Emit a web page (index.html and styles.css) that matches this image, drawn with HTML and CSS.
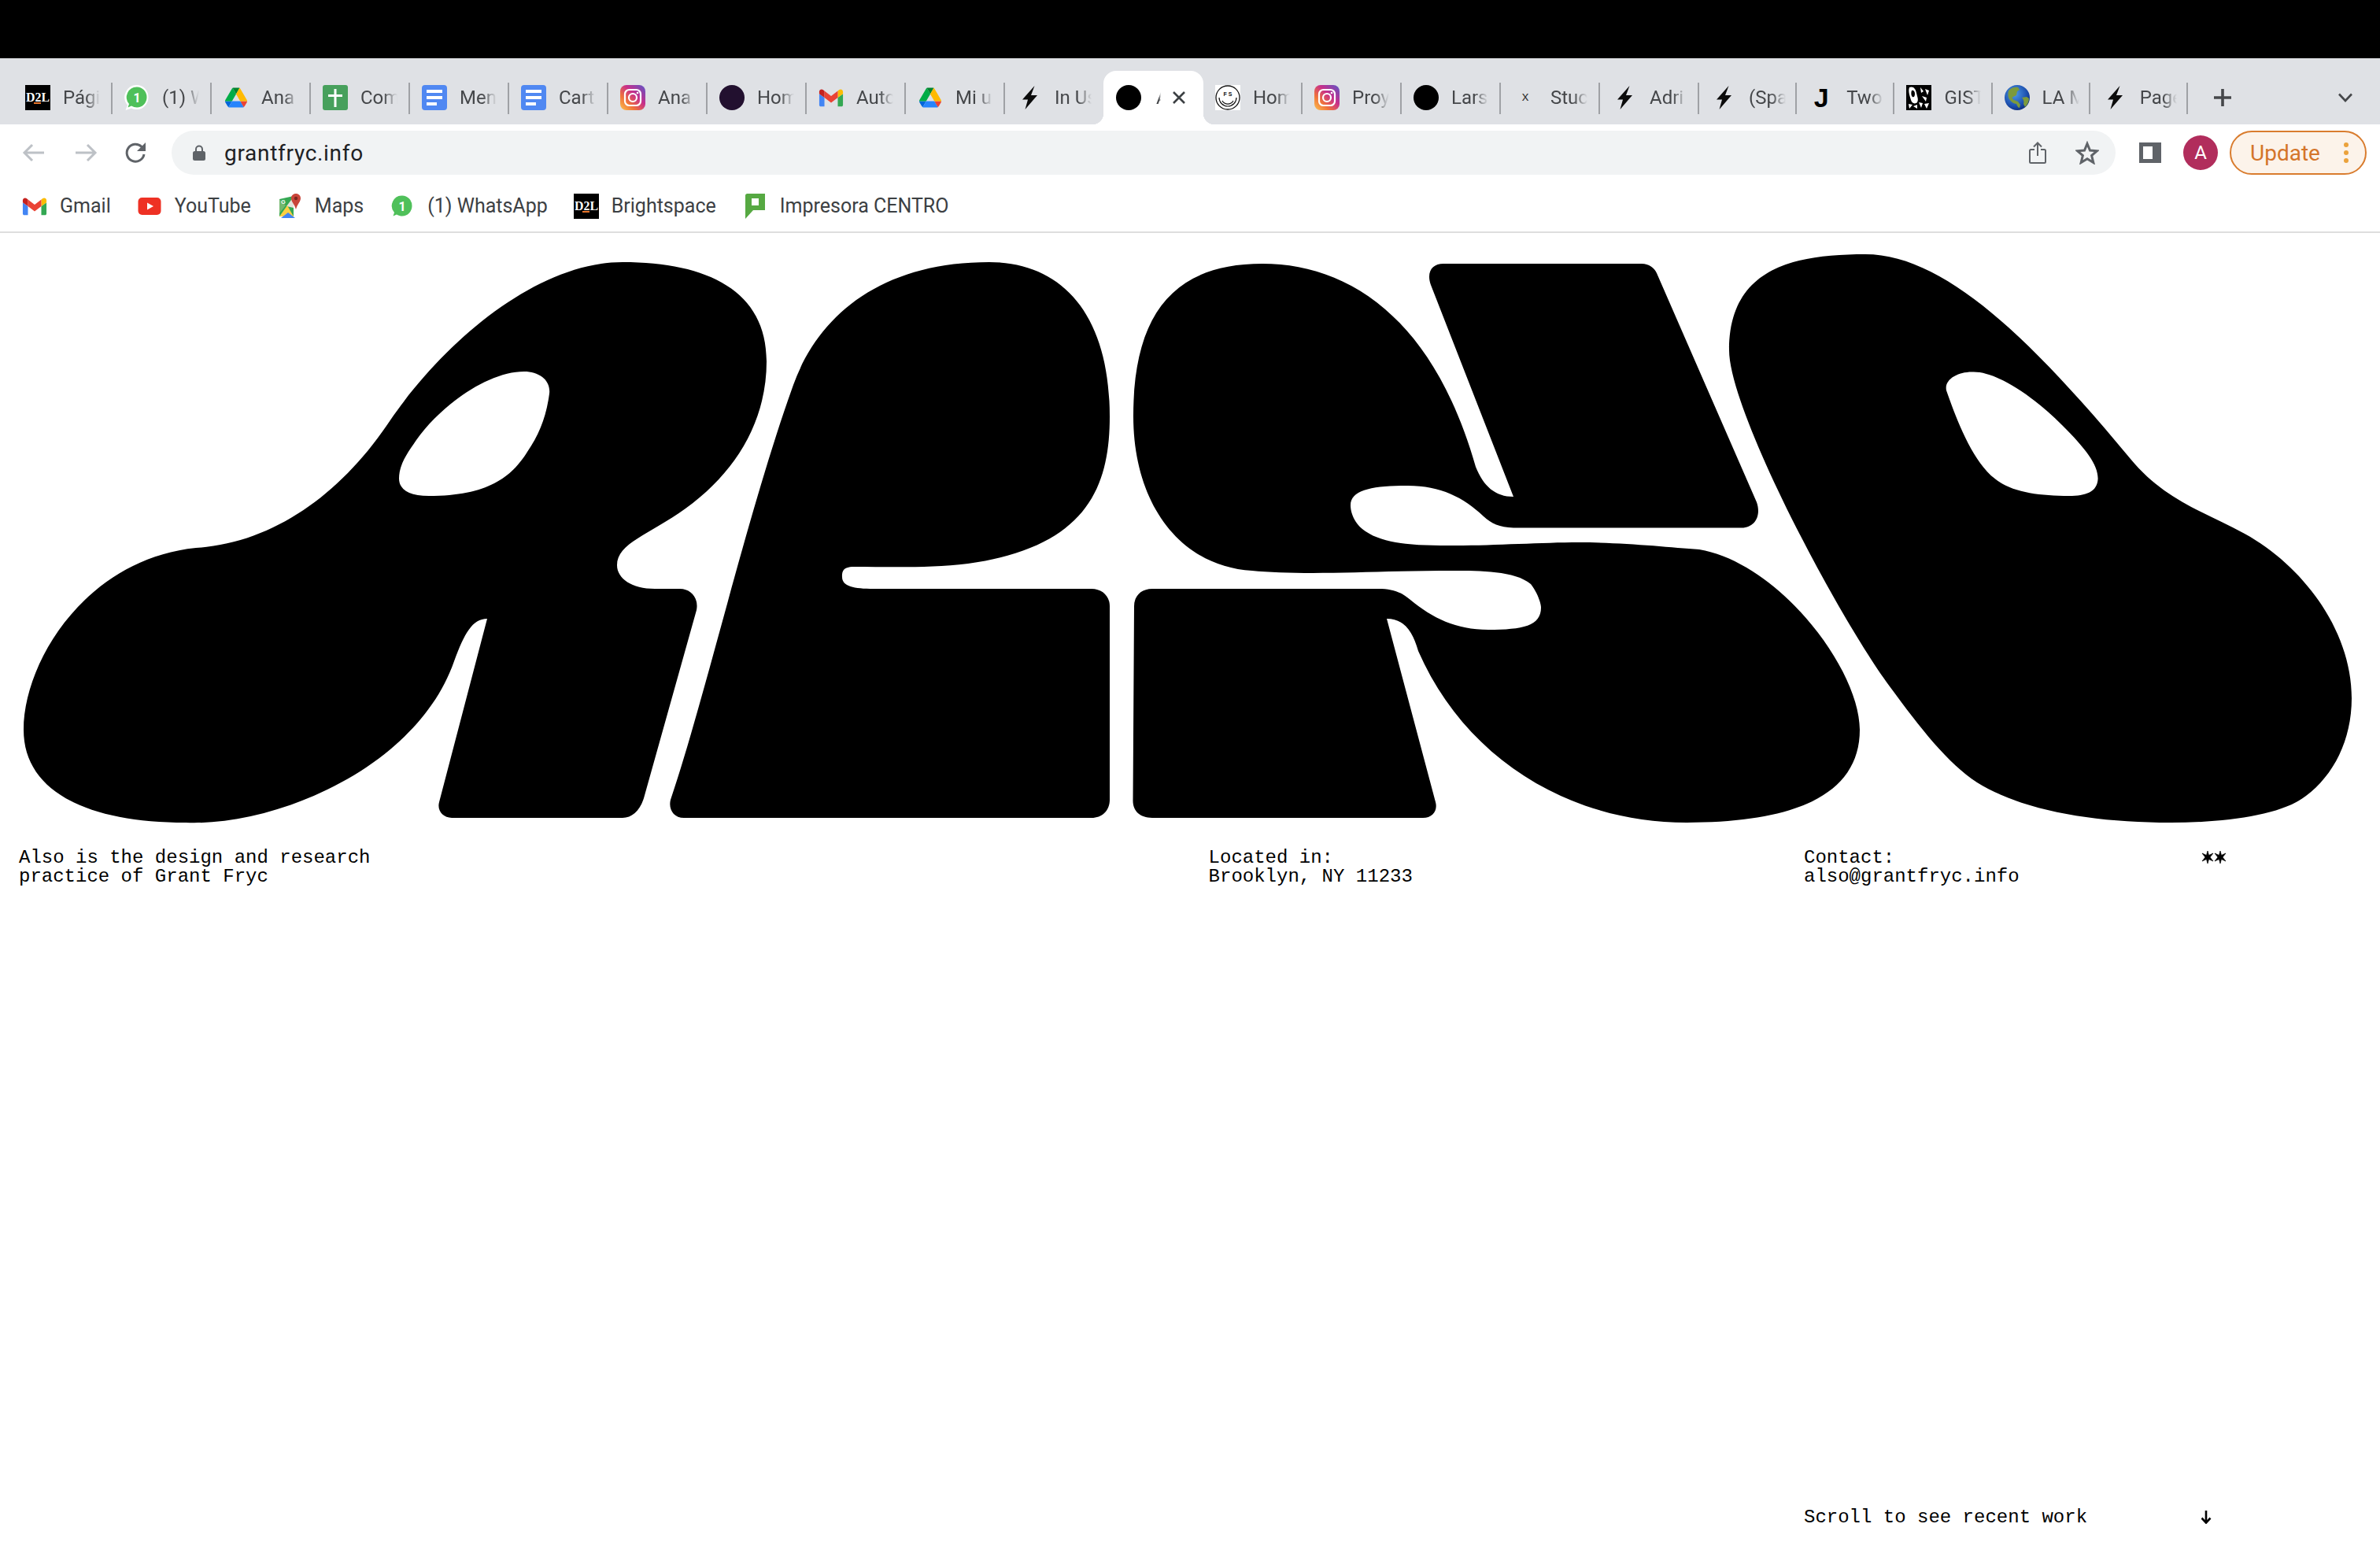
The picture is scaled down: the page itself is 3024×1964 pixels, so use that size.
FILE: index.html
```html
<!DOCTYPE html>
<html lang="en">
<head>
<meta charset="utf-8">
<title>Also</title>
<link rel="stylesheet" href="styles.css">
</head>
<body>
<svg class="sprite" aria-hidden="true">
  <defs>
    <linearGradient id="ig" x1="0" y1="1" x2="1" y2="0">
      <stop offset="0" stop-color="#fcc24f"/><stop offset=".3" stop-color="#f0743a"/><stop offset=".6" stop-color="#c72f8b"/><stop offset="1" stop-color="#5b55c8"/>
    </linearGradient>
    <radialGradient id="gl" cx=".4" cy=".35" r=".7">
      <stop offset="0" stop-color="#4f9be8"/><stop offset=".7" stop-color="#1c4fae"/><stop offset="1" stop-color="#0c2a78"/>
    </radialGradient>
    <symbol id="i-d2l" viewBox="0 0 32 32">
      <rect width="32" height="32" fill="#000"/>
      <text x="16" y="21" text-anchor="middle" textLength="30" lengthAdjust="spacingAndGlyphs" class="d2l-t">D2L</text>
      <rect x="11" y="22" width="9" height="2" fill="#e8762c"/>
    </symbol>
    <symbol id="i-wa" viewBox="0 0 32 32">
      <path d="M16 0a14.500 15.500 0 0 1 0 31c-3 0-5-.5-7-1.500L1.500 32l2.500-6.500A15.500 15.500 0 0 1 16 0z" fill="#fff"/>
      <path d="M16 2.500a12.500 13 0 0 1 0 26c-2.500 0-5-.7-7-2l-4.500 2 1.500-4.500A13 13 0 0 1 16 2.500z" fill="#4fc05a"/>
      <text x="16" y="21.500" text-anchor="middle" class="wa-t">1</text>
    </symbol>
    <symbol id="i-drive" viewBox="-6 -2 99.300 82">
      <path d="m6.600 66.850 3.850 6.650c.8 1.400 1.950 2.500 3.300 3.300l13.750-23.800h-27.500c0 1.550.4 3.100 1.200 4.500z" fill="#0066da"/>
      <path d="m43.650 25-13.750-23.800c-1.350.8-2.500 1.900-3.300 3.300l-25.400 44a9.060 9.060 0 0 0 -1.200 4.500h27.500z" fill="#00ac47"/>
      <path d="m73.550 76.800c1.350-.8 2.500-1.900 3.300-3.300l1.600-2.750 7.650-13.250c.8-1.400 1.200-2.950 1.200-4.500h-27.502l5.852 11.500z" fill="#ea4335"/>
      <path d="m43.650 25 13.750-23.800c-1.350-.8-2.900-1.200-4.500-1.200h-18.500c-1.600 0-3.150.45-4.500 1.200z" fill="#00832d"/>
      <path d="m59.800 53h-32.300l-13.750 23.800c1.350.8 2.900 1.200 4.500 1.200h50.800c1.600 0 3.150-.45 4.500-1.200z" fill="#2684fc"/>
      <path d="m73.400 26.500-12.700-22c-.8-1.400-1.950-2.500-3.300-3.300l-13.750 23.800 16.150 28h27.450c0-1.550-.4-3.100-1.200-4.500z" fill="#ffba00"/>
    </symbol>
    <symbol id="i-cross" viewBox="0 0 32 32">
      <rect width="32" height="32" rx="3" fill="#47a05c"/>
      <path d="M14.500 5h3v7H25v3h-7.500v13h-3V15H7v-3h7.500z" fill="#fff"/>
    </symbol>
    <symbol id="i-doc" viewBox="0 0 32 32">
      <rect width="32" height="32" rx="4" fill="#5088f2"/>
      <path d="M6 6h20v4H6zM6 14h20v4H6zM6 22h13v4H6z" fill="#fff"/>
    </symbol>
    <symbol id="i-ig" viewBox="0 0 32 32">
      <rect width="32" height="32" rx="8" fill="url(#ig)"/>
      <rect x="6" y="6" width="20" height="20" rx="5.500" fill="none" stroke="#fff" stroke-width="2.200"/>
      <circle cx="16" cy="16" r="5" fill="none" stroke="#fff" stroke-width="2.200"/>
      <circle cx="22" cy="10" r="1.300" fill="#fff"/>
    </symbol>
    <symbol id="i-dark" viewBox="0 0 32 32"><circle cx="16" cy="16" r="16" fill="#22102f"/></symbol>
    <symbol id="i-black" viewBox="0 0 32 32"><circle cx="16" cy="16" r="16" fill="#000"/></symbol>
    <symbol id="i-gmail" viewBox="-1 -5 34 34">
      <path fill="#4285f4" d="M2 24h5V12L0 7v15c0 1 .9 2 2 2z"/>
      <path fill="#34a853" d="M25 24h5c1.100 0 2-1 2-2V7l-7 5z"/>
      <path fill="#fbbc04" d="M25 3v9l7-5V4c0-2.600-3-4-5-2.500z"/>
      <path fill="#ea4335" d="M7 12V3l9 6.800L25 3v9l-9 6.800z"/>
      <path fill="#c5221f" d="M0 4v3l7 5V3L5 1.500C3 0 0 1.400 0 4z"/>
    </symbol>
    <symbol id="i-bolt" viewBox="0 0 32 32">
      <path d="M22.500 1 7 18.500h7L10.500 31 26 13h-8z" fill="#0b0b0b"/>
    </symbol>
    <symbol id="i-fs" viewBox="0 0 32 32">
      <rect width="32" height="32" fill="#fff"/>
      <circle cx="16" cy="16" r="15" fill="none" stroke="#111" stroke-width="1.300"/>
      <path d="M5 16a11 11 0 0 0 22 0M9 20a8 8 0 0 0 14 0" fill="none" stroke="#111" stroke-width="1.200"/>
      <text x="16" y="14" text-anchor="middle" class="fs-t">F S</text>
    </symbol>
    <symbol id="i-gist" viewBox="0 0 32 32">
      <rect width="32" height="32" fill="#000"/>
      <path d="M4 3c5-2 8 2 9 7s3 8 1 12c-3 3-7 1-8-3S2 8 4 3z" fill="#fff"/>
      <path d="M7 7c2-1 4 1 4 4s-1 5-3 4-2-6-1-8z" fill="#000"/>
      <path d="M18 3l4 5-3 2zM24 5l5 2-2 6zM20 14l6 2-1 5zM16 22l5 1-2 6zM23 24l6-1-3 7zM3 24l5 1-4 5zM9 27l5-2 0 5z" fill="#fff"/>
    </symbol>
    <symbol id="i-globe" viewBox="0 0 32 32">
      <circle cx="16" cy="16" r="16" fill="url(#gl)"/>
      <path d="M6 6c3-3 8-4 11-3l2 3-3 2-1 5-4 2c-2 0-1 3 1 4l5 2 3 4-1 4c-2 0-3-3-4-5-3 0-7-3-9-6S4 8 6 6zM22 16l6-1 3 2c0 4-2 8-5 11l-2-4c1-3 0-6-2-8z" fill="#7c9a3c"/>
    </symbol>
    <symbol id="i-maps" viewBox="0 0 32 32">
      <path d="M3 7l18-4v26H3z" fill="#34a853"/>
      <path d="M12 16 21 4v14z" fill="#e4e2db"/>
      <path d="M3 29 13 15l8 14z" fill="#fbd044"/>
      <path d="M5 31 14 24l9 7z" fill="#4285f4"/>
      <path d="M3 7l8 8-8 10z" fill="#74b86f"/>
      <path d="M24 0c3.500 0 6 2.500 6 6 0 4-4 7-6 14-2-7-6-10-6-14 0-3.500 2.500-6 6-6z" fill="#c9453a"/>
      <circle cx="24" cy="6" r="2.200" fill="#7a2720"/>
      <text x="8" y="13" text-anchor="middle" class="maps-t">G</text>
    </symbol>
    <symbol id="i-yt" viewBox="0 0 32 32">
      <rect x="1.500" y="5" width="29" height="22" rx="5" fill="#ee3124"/>
      <path d="M13 11.500 21 16l-8 4.500z" fill="#fff"/>
    </symbol>
    <symbol id="i-print" viewBox="0 0 32 32">
      <path d="M4 2.500C4 1 5 0 6.500 0H29v21H14L4 32z" fill="#56a942"/>
      <rect x="12" y="6" width="9" height="9" fill="#fff"/>
    </symbol>
  </defs>
</svg>

<div class="page">
  <header class="chrome">
    <div class="topbar"></div>
    <div class="tabstrip">
      <div class="tab"><svg class="fav"><use href="#i-d2l"/></svg><span class="title">Pági</span></div>
      <div class="tab"><svg class="fav"><use href="#i-wa"/></svg><span class="title">(1) W</span></div>
      <div class="tab"><svg class="fav"><use href="#i-drive"/></svg><span class="title">Ana</span></div>
      <div class="tab"><svg class="fav"><use href="#i-cross"/></svg><span class="title">Com</span></div>
      <div class="tab"><svg class="fav"><use href="#i-doc"/></svg><span class="title">Men</span></div>
      <div class="tab"><svg class="fav"><use href="#i-doc"/></svg><span class="title">Cart</span></div>
      <div class="tab"><svg class="fav"><use href="#i-ig"/></svg><span class="title">Ana</span></div>
      <div class="tab"><svg class="fav"><use href="#i-dark"/></svg><span class="title">Hom</span></div>
      <div class="tab"><svg class="fav"><use href="#i-gmail"/></svg><span class="title">Auto</span></div>
      <div class="tab"><svg class="fav"><use href="#i-drive"/></svg><span class="title">Mi u</span></div>
      <div class="tab tab-before-active"><svg class="fav"><use href="#i-bolt"/></svg><span class="title">In Us</span></div>
      <div class="tab tab-active"><svg class="fav"><use href="#i-black"/></svg><span class="title title-active">A</span>
        <svg class="tab-close" viewBox="0 0 18 18"><path d="M2 2l14 14M16 2 2 16"/></svg></div>
      <div class="tab"><svg class="fav"><use href="#i-fs"/></svg><span class="title">Hom</span></div>
      <div class="tab"><svg class="fav"><use href="#i-ig"/></svg><span class="title">Proy</span></div>
      <div class="tab"><svg class="fav"><use href="#i-black"/></svg><span class="title">Lars</span></div>
      <div class="tab"><span class="fav fav-x">x</span><span class="title">Stuc</span></div>
      <div class="tab"><svg class="fav"><use href="#i-bolt"/></svg><span class="title">Adri</span></div>
      <div class="tab tab-tight"><svg class="fav"><use href="#i-bolt"/></svg><span class="title">(Spa</span></div>
      <div class="tab tab-tight"><span class="fav fav-j">J</span><span class="title">Two</span></div>
      <div class="tab tab-tight"><svg class="fav"><use href="#i-gist"/></svg><span class="title">GIST</span></div>
      <div class="tab tab-tight"><svg class="fav"><use href="#i-globe"/></svg><span class="title">LA M</span></div>
      <div class="tab tab-tight"><svg class="fav"><use href="#i-bolt"/></svg><span class="title">Page</span></div>
      <svg class="newtab" viewBox="0 0 24 24"><path d="M12 1v22M1 12h22"/></svg>
      <svg class="tabmenu" viewBox="0 0 18 12"><path d="M1 1.500 9 10l8-8.500"/></svg>
    </div>

    <div class="toolbar">
      <svg class="nav nav-off" viewBox="0 0 32 32"><path d="M29 16H5M14 6 4 16l10 10"/></svg>
      <svg class="nav nav-off nav-fwd" viewBox="0 0 32 32"><path d="M3 16h24M18 6l10 10-10 10"/></svg>
      <svg class="nav nav-on" viewBox="0 0 32 32"><path d="M26 18a11 11 0 1 1-3-9.500l3.500 3.500"/><path class="solid" d="M28 3v11H17z"/></svg>
      <div class="omnibox">
        <svg class="lock" viewBox="0 0 16 20"><path d="M4 8V5.500a4 4 0 0 1 8 0V8" fill="none" stroke="#5f6368" stroke-width="2"/><rect y="8" width="16" height="12" rx="2.500" fill="#5f6368"/></svg>
        <span class="url">grantfryc.info</span>
        <svg class="omni-share" viewBox="0 0 22 28"><path d="M7 10H2.500A1.500 1.500 0 0 0 1 11.500v14A1.500 1.500 0 0 0 2.500 27h17a1.500 1.500 0 0 0 1.500-1.500v-14a1.500 1.500 0 0 0-1.500-1.500H15M11 18V2M6 6.500 11 1.500l5 5"/></svg>
        <svg class="omni-star" viewBox="0 0 30 30"><path d="M15 3.500 18.500 12l9 .7-6.900 5.900 2.200 8.900L15 22.700l-7.800 4.800 2.200-8.900L2.500 12.700l9-.7z"/></svg>
      </div>
      <div class="sidepanel"></div>
      <div class="avatar">A</div>
      <div class="update"><span>Update</span><svg class="dots" viewBox="0 0 8 28"><circle cx="4" cy="4" r="3"/><circle cx="4" cy="14" r="3"/><circle cx="4" cy="24" r="3"/></svg></div>
    </div>

    <nav class="bookmarks">
      <div class="bm"><svg class="fav"><use href="#i-gmail"/></svg><span>Gmail</span></div>
      <div class="bm"><svg class="fav"><use href="#i-yt"/></svg><span>YouTube</span></div>
      <div class="bm"><svg class="fav"><use href="#i-maps"/></svg><span>Maps</span></div>
      <div class="bm"><svg class="fav"><use href="#i-wa"/></svg><span>(1) WhatsApp</span></div>
      <div class="bm"><svg class="fav"><use href="#i-d2l"/></svg><span>Brightspace</span></div>
      <div class="bm"><svg class="fav"><use href="#i-print"/></svg><span>Impresora CENTRO</span></div>
    </nav>
  </header>

  <main class="site">
    <svg class="logo" viewBox="0 296 3024 782" role="img" aria-label="Also">
      <path fill-rule="evenodd" d="M791 333C900 333 974 370 974 459C974 535 935 600 871 646C825 679 784 690 784 718C784 735 803 748 832 748L864 748C878 748 888 760 885 775L818 1014C813 1030 803 1039 791 1039L574 1039C563 1039 555 1030 558 1019L619 786C600 786 590 805 577 840C530 975 350 1050 236 1045C110 1045 30 1005 30 927C30 840 110 710 249 696C345 690 430 630 491 541C561 436 681 333 791 333ZM666 472C685 472 700 483 698 500C694 530 685 552 670 574C650 606 620 630 545 630C520 630 507 622 507 608C507 590 518 575 529 559C560 515 620 472 666 472Z"/>
      <path d="M1257 333C1350 333 1410 400 1410 529C1410 620 1380 695 1230 716C1180 722 1130 720 1085 720C1070 720 1070 727 1070 733C1070 745 1085 748 1110 748L1387 748C1400 748 1410 757 1410 770L1410 1016C1410 1030 1400 1039 1387 1039L869 1039C856 1039 849 1028 852 1016C895 890 950 650 1008 489C1040 400 1120 333 1257 333Z"/>
      <path d="M1604 335C1710 335 1820 400 1875 593C1885 618 1900 631 1923 631L1818 362C1812 345 1820 335 1834 335L2086 335C2095 335 2102 340 2105 347L2232 638C2238 655 2230 670 2213 670.500L1923 670.500C1905 670 1895 665 1885 656C1860 632 1830 617 1789 617C1745 617 1716 622 1716 642C1716 650 1720 665 1735 675C1760 692 1800 693 1850 693C1900 693 1960 689 2006 689C2060 689 2120 695 2159 698C2260 715 2363 850 2363 927C2363 1010 2280 1045 2143 1045C1990 1045 1860 960 1802 827C1795 803 1785 786 1762 786L1824 1019C1827 1030 1820 1039 1808 1039L1464 1039C1448 1039 1439 1030 1439.500 1016L1441 770C1441 757 1450 748 1464 748L1751 748C1770 748 1780 752 1792 762C1820 785 1850 800 1891 800C1935 800 1958 795 1958 772C1958 768 1955 755 1945 742C1925 725 1880 725 1847 725C1780 725 1720 728 1668 728C1640 728 1610 727 1591 725C1500 720 1440 640 1440 529C1440 400 1490 335 1604 335Z"/>
      <path fill-rule="evenodd" d="M2370 323C2280 323 2197 340 2197 445C2197 520 2330 775 2401 872C2440 925 2475 970 2512 994C2570 1030 2660 1045 2758 1045C2830 1045 2900 1035 2930 1011C2965 985 2988 940 2988 887C2988 800 2925 718 2852 678C2800 650 2750 635 2707 583C2580 430 2470 323 2370 323ZM2507 472.600C2535 472 2580 500 2620 540C2650 570 2665.600 590 2665.600 608C2665 625 2650 630 2629 630C2590 630 2555 625 2534.600 608C2505 585 2485 530 2473 496C2470 482 2488 472 2507 472.600Z"/>
    </svg>

    <section class="info">
      <p class="info-text">Also is the design and research<br>practice of Grant Fryc</p>
      <p class="info-text">Located in:<br>Brooklyn, NY 11233</p>
      <p class="info-text">Contact:<br>also@grantfryc.info</p>
      <svg class="stars" viewBox="0 0 32 16"><path d="M8 0l1.500 5.500L15 3 11 8l4 5-5.500-2.500L8 16l-1.500-5.500L1 13l4-5-4-5 5.500 2.500zM24 0l1.500 5.500L31 3l-4 5 4 5-5.500-2.500L24 16l-1.500-5.500L17 13l4-5-4-5 5.500 2.500z"/></svg>
    </section>

    <section class="scroll">
      <span></span><span></span>
      <p class="info-text">Scroll to see recent work</p>
      <svg class="arrow" viewBox="0 0 16 18"><path d="M6 1v15M0.500 10.500 6 16.500l5.500-6"/></svg>
    </section>
  </main>
</div>
</body>
</html>
```

FILE: styles.css
```css
* { box-sizing: border-box; }
html, body { margin: 0; padding: 0; background: #fff; }
body { font-family: Roboto, "Liberation Sans", sans-serif; color: #000; }
.sprite { position: absolute; width: 0; height: 0; }
.d2l-t { font: 700 17px "Liberation Serif", serif; fill: #fff; }
.wa-t { font: 700 16px Roboto, sans-serif; fill: #fff; }
.fs-t { font: 700 7px "Liberation Sans", sans-serif; fill: #111; }
.maps-t { font: 700 7px "Liberation Sans", sans-serif; fill: #fff; }
.page { width: 3024px; height: 1964px; display: flex; flex-direction: column; overflow: hidden; }

.chrome { flex: none; }
.topbar { height: 74px; background: #000; }
.tabstrip { height: 84px; background: #dfe1e5; display: flex; align-items: flex-end; padding-left: 17px; position: relative; }
.tab { width: 126px; height: 68px; display: flex; align-items: center; padding-left: 15px; gap: 16px; position: relative; flex: none; }
.tab-tight { width: 124.2px; }
.tab::after { content: ""; position: absolute; right: 0; top: 15px; width: 2px; height: 40px; background: #9fa1a5; }
.tab-before-active { width: 125px; }
.tab-before-active::after, .tab-active::after { display: none; }
.tab-active { width: 127px; padding-left: 16px; background: #fff; border-radius: 16px 16px 0 0; }
.tab-active::before { content: ""; position: absolute; left: -14px; right: -14px; bottom: 0; height: 14px; z-index: 0;
  background:
    radial-gradient(circle at 0 0, #dfe1e5 14px, #fff 14.5px) left bottom / 14px 14px no-repeat,
    radial-gradient(circle at 100% 0, #dfe1e5 14px, #fff 14.5px) right bottom / 14px 14px no-repeat; }
.tab-active > * { z-index: 1; position: relative; }
.fav { width: 32px; height: 32px; flex: none; display: block; }
.fav-x { font: 16px/32px "Liberation Mono", monospace; text-align: center; color: #333; }
.fav-j { font: 700 34px/32px "Liberation Sans", sans-serif; text-align: center; color: #000; }
.title { width: 47px; flex: none; overflow: hidden; white-space: nowrap; font-size: 24px; color: #45474a;
  -webkit-mask-image: linear-gradient(to right, #000 62%, transparent 100%); mask-image: linear-gradient(to right, #000 62%, transparent 100%); }
.title-active { width: 6px; flex: none; margin-left: 3px; }
.tab-close { width: 18px; height: 18px; flex: none; margin-left: -2px; fill: none; stroke: #3c4043; stroke-width: 2.6; }
.newtab { width: 24px; height: 24px; margin-left: 32px; align-self: center; position: relative; top: 8px; fill: none; stroke: #45474a; stroke-width: 3.6; flex: none; }
.tabmenu { width: 18px; height: 12px; margin-left: 135px; align-self: center; position: relative; top: 8px; fill: none; stroke: #45474a; stroke-width: 2.6; flex: none; }

.toolbar { height: 72px; background: #fff; display: flex; align-items: center; padding: 0 17px 0 27px; }
.nav { width: 32px; height: 32px; flex: none; fill: none; stroke-width: 3; margin-right: 34px; }
.nav-off { stroke: #bdc1c6; }
.nav-fwd { margin-right: 32px; }
.nav-on { stroke: #5f6368; margin-right: 29px; }
.nav-on .solid { fill: #5f6368; stroke: none; }
.omnibox { flex: 1; height: 56px; border-radius: 28px; background: #f1f3f4; display: flex; align-items: center; padding: 0 21px 0 27px; }
.lock { width: 16px; height: 20px; flex: none; margin-right: 24px; }
.url { flex: 1; font-size: 28px; color: #202124; letter-spacing: .7px; }
.omni-share { width: 22px; height: 28px; flex: none; fill: none; stroke: #5f6368; stroke-width: 2; margin-right: 37px; }
.omni-star { width: 30px; height: 30px; flex: none; fill: none; stroke: #5f6368; stroke-width: 3; }
.sidepanel { width: 28px; height: 26px; margin-left: 30px; flex: none; border: 5px solid #5f6368; border-right-width: 11px; background: #fff; }
.avatar { width: 44px; height: 44px; margin-left: 28px; flex: none; border-radius: 50%; background: #b12d5c; color: #fff; font-size: 24px; display: flex; align-items: center; justify-content: center; }
.update { width: 174px; height: 56px; margin-left: 15px; flex: none; border: 2px solid #d97c2e; border-radius: 28px; background: #fcf3ea; color: #d4752a; font-size: 28px; display: flex; align-items: center; padding-left: 24px; }
.dots { width: 8px; height: 28px; margin-left: 29px; fill: #eba23c; flex: none; }

.bookmarks { height: 66px; background: #fff; border-bottom: 2px solid #dedede; padding: 0 0 1px 28px; display: flex; align-items: center; gap: 33px; }
.bm { display: flex; align-items: center; gap: 16px; font-size: 25px; color: #3c4043; white-space: nowrap; }

.site { flex: 1; display: flex; flex-direction: column; padding-bottom: 24px; }
.logo { display: block; width: 3024px; height: 782px; flex: none; fill: #000; }
.info, .scroll { display: grid; grid-template-columns: 1511.6px 756.4px 505px 1fr; padding-left: 24px; }
.scroll { margin-top: auto; }
.info-text { margin: 0; font: 24px/24px "Liberation Mono", monospace; color: #000; white-space: pre-wrap; }
.stars { width: 32px; height: 16px; display: block; margin-top: 3px; fill: #000; stroke: #000; stroke-width: .7; }
.arrow { width: 16px; height: 18px; display: block; margin-top: 2px; fill: none; stroke: #000; stroke-width: 2.6; }
```
